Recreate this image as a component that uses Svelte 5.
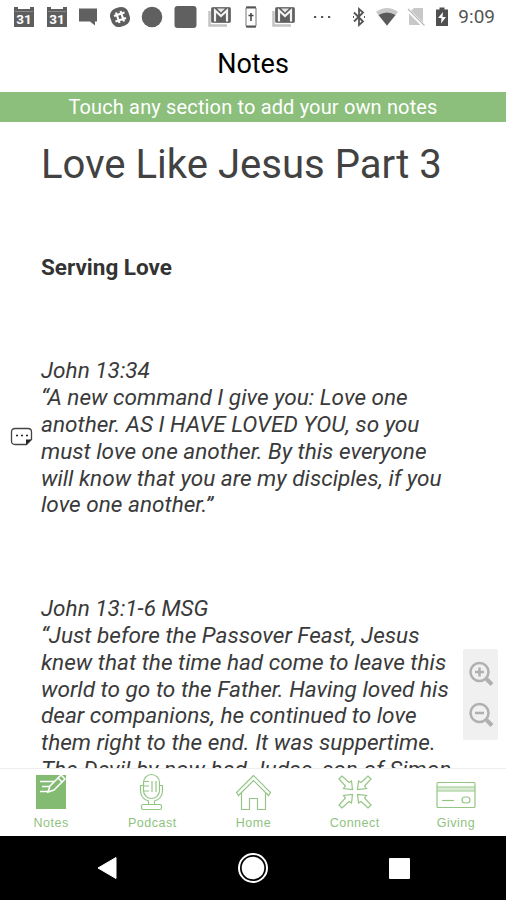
<script>
  const title = 'Love Like Jesus Part 3';

  const passages = [
    {
      verse: 'John 13:34',
      hasNote: true,
      lines: [
        '“A new command I give you: Love one',
        'another. AS I HAVE LOVED YOU, so you',
        'must love one another. By this everyone',
        'will know that you are my disciples, if you',
        'love one another.”',
      ],
    },
    {
      verse: 'John 13:1-6 MSG',
      hasNote: false,
      lines: [
        '“Just before the Passover Feast, Jesus',
        'knew that the time had come to leave this',
        'world to go to the Father. Having loved his',
        'dear companions, he continued to love',
        'them right to the end. It was suppertime.',
        'The Devil by now had Judas, son of Simon',
      ],
    },
  ];

  const tabs = ['Notes', 'Podcast', 'Home', 'Connect', 'Giving'];

  // one arrow, mirrored into the four corners
  const arrows = [
    '',
    'translate(40 0) scale(-1 1)',
    'translate(0 38) scale(1 -1)',
    'translate(40 38) scale(-1 -1)',
  ];

  let active = $state('Notes');
  let zoom = $state(1);
</script>

{#snippet calendar()}
  <svg class="calendar" width="22" height="22" viewBox="0 0 22 22">
    <path d="M1 1h4v2h12V1h4v20H1z" fill="#5e5e5e" />
    <path d="M2 5.500h18" stroke="#888" />
    <text x="11" y="17.500" text-anchor="middle">31</text>
  </svg>
{/snippet}

{#snippet mail()}
  <svg class="mail" width="24" height="22" viewBox="0 0 24 22">
    <path d="M1.500 5v14.500H19" fill="none" stroke="#c4c4c4" stroke-width="2.500" />
    <rect x="3.500" y="1.500" width="19" height="15" rx="1" fill="#606060" stroke="#777" />
    <path d="M7 15.500V4.500l6 5.500 6-5.500v11" fill="none" stroke="#f4f4f4" stroke-width="2.200" />
    <path d="M9 2.500h8L13 6.500z" fill="#e8e8e8" />
  </svg>
{/snippet}

<div class="phone">
  <div class="status">
    <div class="notifications">
      {@render calendar()}
      {@render calendar()}
      <svg width="20" height="22" viewBox="0 0 20 22">
        <path d="M1 2.500h18v13h-2v4l-5-4H1z" fill="#606060" />
      </svg>
      <svg width="22" height="22" viewBox="0 0 22 22">
        <rect x="1.500" y="1.500" width="19" height="19" rx="7.500" fill="#5e5e5e" transform="rotate(-18 11 11)" />
        <path d="M7 6.500l3.500 10.500M11.500 5l3.500 10.500M5 10l10.500-3.500M6.500 15.500L17 12" stroke="#fff" stroke-width="2.200" />
      </svg>
      <svg width="22" height="22" viewBox="0 0 22 22">
        <circle cx="11" cy="11" r="10.300" fill="#606060" />
      </svg>
      <svg width="23" height="22" viewBox="0 0 23 22">
        <rect x=".5" y="0" width="22" height="22" rx="3" fill="#606060" />
      </svg>
      {@render mail()}
      <svg class="book" width="12" height="22" viewBox="0 0 12 22">
        <rect x="1" y="1" width="10" height="20" rx="1.500" fill="#fff" stroke="#777" />
        <path d="M1 1.500h10M1 20.500h10" stroke="#555" stroke-width="2" />
        <path d="M6 7v8M3.500 9.500h5" stroke="#444" stroke-width="1.500" />
      </svg>
      {@render mail()}
      <svg class="more" width="20" height="22" viewBox="0 0 20 22">
        <path d="M2 11h2.200M9 11h2.200M16 11h2.200" stroke="#555" stroke-width="2.200" />
      </svg>
    </div>
    <div class="system">
      <svg width="14" height="20" viewBox="0 0 14 20">
        <path d="M2 5.500l9 9L7 18V2l4 3.500-9 9M1 10h1M12 10h1" fill="none" stroke="#555" stroke-width="1.800" />
      </svg>
      <svg class="wifi" width="24" height="20" viewBox="0 0 24 20">
        <path d="M1 5Q12-3 23 5L12 19z" fill="#c8c8c8" />
        <path d="M3.500 8Q12 3 20.500 8L12 18.500z" fill="#5a5a5a" />
      </svg>
      <svg class="sim" width="18" height="20" viewBox="0 0 18 20">
        <path d="M7 1h9v17H2V6z" fill="#c8c8c8" />
        <path d="M0 2l17 17" stroke="#fff" stroke-width="3.500" />
        <path d="M1 2l16.500 16.500" stroke="#bbb" stroke-width="1.300" />
      </svg>
      <svg class="battery" width="14" height="20" viewBox="0 0 14 20">
        <path d="M1 2.500h3.500V.5h5v2H13V19H1z" fill="#4f4f4f" />
        <path d="M8 5l-5 6h3.500L6 16.500l5-6.500H7.500z" fill="#fff" />
      </svg>
      <span class="clock">9:09</span>
    </div>
  </div>

  <header>Notes</header>
  <div class="banner">Touch any section to add your own notes</div>

  <main>
    <article style:zoom>
      <h1>{title}</h1>
      <h2>Serving Love</h2>
      {#each passages as passage}
        <section>
          {#if passage.hasNote}
            <svg class="note" width="24" height="20" viewBox="0 0 24 20">
              <path d="M5 1.500h13q3.500 0 3.500 3.500v7.500l-5 5H5Q1.500 17.500 1.500 14V5Q1.500 1.500 5 1.500z" fill="#fff" stroke="#444" stroke-width="1.300" />
              <path d="M16 17.500v-5h5.500z" fill="#222" />
              <path d="M6 8.500h2M11 8.500h2M16 8.500h2" stroke="#222" stroke-width="1.700" />
            </svg>
          {/if}
          <p>{passage.verse}</p>
          {#each passage.lines as line}
            <p>{line}</p>
          {/each}
        </section>
      {/each}
    </article>

    <div class="zoom">
      <button aria-label="Zoom in" onclick={() => (zoom += 0.1)}>
        <svg width="26" height="26" viewBox="0 0 26 26">
          <circle cx="11.500" cy="11" r="9" />
          <path d="M11.500 6.500v9M7 11h9" />
          <path d="M18.500 18l5.500 5.500" stroke-width="4" />
        </svg>
      </button>
      <button aria-label="Zoom out" onclick={() => (zoom -= 0.1)}>
        <svg width="26" height="26" viewBox="0 0 26 26">
          <circle cx="11.500" cy="11" r="9" />
          <path d="M7 11h9" />
          <path d="M18.500 18l5.500 5.500" stroke-width="4" />
        </svg>
      </button>
    </div>
  </main>

  <nav class="tabs">
    {#each tabs as tab}
      <button class:active={active === tab} onclick={() => (active = tab)}>
        <svg width="40" height="38" viewBox="0 0 40 38">
          {#if tab === 'Notes'}
            <path d="M5 2h30v34H5z" fill="#83bb72" stroke="none" />
            <g stroke="#fff" stroke-width="1.500">
              <path d="M9 8.500h15M11 13.500h10M9 18.500h8" />
              <path d="M17 19l2-6L30 2l4 4-11 11z" fill="#83bb72" />
              <path d="M27 5l4 4" />
            </g>
          {:else if tab === 'Podcast'}
            <rect x="11.500" y="1.500" width="16" height="24" rx="8" />
            <path d="M11.500 12.500h-3v5c0 6 4 9.500 8 10.500v3.500h6V28c4-1 8-4.500 8-10.500v-5h-3" />
            <path d="M17 8.500h-5M17 13h-5M17 18h-5M20 8v11M24 8v11" />
            <rect x="9.500" y="31.500" width="20" height="5" rx="1.500" />
          {:else if tab === 'Home'}
            <path d="M20.500 2.500L3.500 19.500l2 3 15-15 15 15 2-3z" />
            <path d="M8.500 20v16.500h8v-11h8v11h8V20" />
          {:else if tab === 'Connect'}
            {#each arrows as transform}
              <path d="M4 6l3-3 7 6.500 2.500-1.500L17.500 16.500l-9-1 2-2.500z" {transform} />
            {/each}
          {:else}
            <rect x="1" y="9.500" width="38" height="25" rx="1" />
            <path d="M1 14h38M1 18h38" />
            <path d="M1 16h38" stroke-width="3" opacity=".35" />
            <path d="M6 27.500h12" />
            <rect x="26" y="24" width="8" height="6" rx="3" />
          {/if}
        </svg>
        <span>{tab}</span>
      </button>
    {/each}
  </nav>

  <div class="android">
    <svg width="24" height="32" viewBox="0 0 24 32">
      <path d="M21 5.500v21L3 16z" fill="#fff" stroke="#fff" stroke-linejoin="round" />
    </svg>
    <svg width="32" height="32" viewBox="0 0 32 32">
      <circle cx="16" cy="16" r="14" fill="none" stroke="#fff" stroke-width="2" />
      <circle cx="16" cy="16" r="11.300" fill="#fff" />
    </svg>
    <svg width="24" height="32" viewBox="0 0 24 32">
      <rect x="2" y="6" width="21" height="21" rx="1" fill="#fff" />
    </svg>
  </div>
</div>

<style>
  :global(body) {
    background: #fff;
  }

  .phone {
    height: 900px;
    display: flex;
    flex-direction: column;
    overflow: hidden;
    background: #fff;
    font-family: Roboto, 'Liberation Sans', sans-serif;
  }

  svg {
    display: block;
    flex-shrink: 0;
  }

  button {
    padding: 0;
    border: none;
    background: none;
    cursor: pointer;
  }

  .status {
    height: 33px;
    flex-shrink: 0;
    padding: 0 11px 0 13px;
    display: flex;
    align-items: center;
    justify-content: space-between;
  }

  .notifications {
    display: flex;
    align-items: center;
    gap: 10.6px;
  }

  .calendar text {
    font-size: 13.5px;
    font-weight: 700;
    fill: #fff;
  }

  .book {
    margin: 0 4px 0 3px;
  }

  .more {
    margin-left: 6px;
  }

  .system {
    display: flex;
    align-items: center;
  }

  .wifi {
    margin-left: 9px;
  }

  .sim {
    margin-left: 8px;
  }

  .battery {
    margin-left: 10px;
  }

  .clock {
    margin-left: 9px;
    font-size: 19px;
    line-height: 20px;
    color: #555;
  }

  header {
    height: 59px;
    flex-shrink: 0;
    font-size: 27px;
    line-height: 62px;
    text-align: center;
    color: #000;
  }

  .banner {
    height: 30px;
    flex-shrink: 0;
    background: #8cbe7c;
    color: #fff;
    font-size: 20px;
    line-height: 30px;
    letter-spacing: 0.15px;
    text-align: center;
  }

  main {
    position: relative;
    flex: 1;
    min-height: 0;
    overflow: hidden;
  }

  article {
    padding: 19px 0 0 41px;
    color: #424242;
  }

  h1 {
    margin: 0;
    font-size: 40.1px;
    font-weight: 400;
    line-height: 48px;
    white-space: nowrap;
  }

  h2 {
    margin: 65px 0 77.6px;
    color: #333;
    font-size: 22.5px;
    font-weight: 700;
    line-height: 26.8px;
  }

  section {
    position: relative;
    margin-bottom: 77px;
    color: #3a3a3a;
    font-size: 22.58px;
    font-style: italic;
    font-weight: 400;
    line-height: 26.8px;
    white-space: nowrap;
  }

  section p {
    margin: 0;
  }

  .note {
    position: absolute;
    top: 68.5px;
    left: -31px;
  }

  .zoom {
    position: absolute;
    top: 527px;
    right: 8px;
    width: 35px;
    height: 91px;
    display: flex;
    flex-direction: column;
    align-items: center;
    justify-content: center;
    gap: 15px;
    border-radius: 2px;
    background: #f0f0f0;
  }

  .zoom svg {
    fill: none;
    stroke: #b0b0b0;
    stroke-width: 2.5;
  }

  .tabs {
    height: 67px;
    flex-shrink: 0;
    display: grid;
    grid-template-columns: repeat(5, 1fr);
    border-top: 1px solid #eee;
  }

  .tabs button {
    display: flex;
    flex-direction: column;
    align-items: center;
    padding: 4px 0 0 1px;
    color: #8fc280;
    font-family: 'Liberation Sans', Arial, sans-serif;
    font-size: 12.5px;
    line-height: 14px;
    letter-spacing: 0.5px;
  }

  .tabs svg {
    margin-bottom: 5px;
    fill: none;
    stroke: #94c585;
    stroke-width: 1.2;
  }

  .android {
    height: 64px;
    flex-shrink: 0;
    display: flex;
    align-items: center;
    justify-content: center;
    gap: 118px;
    background: #000;
  }
</style>
